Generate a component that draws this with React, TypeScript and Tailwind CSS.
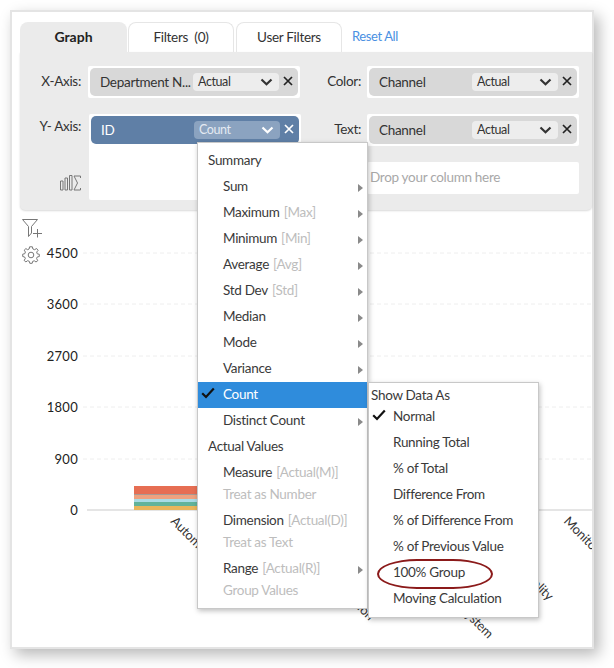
import React from 'react';

const SUMMARY = [
  { name: 'Sum' },
  { name: 'Maximum', hint: '[Max]' },
  { name: 'Minimum', hint: '[Min]' },
  { name: 'Average', hint: '[Avg]' },
  { name: 'Std Dev', hint: '[Std]' },
  { name: 'Median' },
  { name: 'Mode' },
  { name: 'Variance' },
];

const SHOW_AS = ['Running Total', '% of Total', 'Difference From', '% of Difference From', '% of Previous Value'];

const TICKS = [
  { label: '4500', y: 253 },
  { label: '3600', y: 304 },
  { label: '2700', y: 356 },
  { label: '1800', y: 407 },
  { label: '900', y: 459 },
  { label: '0', y: 510 },
];

const STACK = [
  { y: 486, h: 8, fill: '#e66e53' },
  { y: 494, h: 1, fill: '#a89a94' },
  { y: 495, h: 4, fill: '#eea27f' },
  { y: 499, h: 3, fill: '#a8dbe6' },
  { y: 502, h: 4, fill: '#62b39a' },
  { y: 506, h: 4, fill: '#e9b55b' },
];

const Chevron = ({ light }: { light?: boolean }) => (
  <svg width="13" height="8" viewBox="0 0 13 8" className={light ? 'text-white' : 'text-[#333]'}>
    <path d="M1.5 1.5 L6.5 6.2 L11.5 1.5" fill="none" stroke="currentColor" strokeWidth="2.2" />
  </svg>
);

const Close = ({ light }: { light?: boolean }) => (
  <svg width="10" height="10" viewBox="0 0 10 10" className={light ? 'text-white' : 'text-[#222]'}>
    <path d="M1 1 L9 9 M9 1 L1 9" fill="none" stroke="currentColor" strokeWidth="1.7" />
  </svg>
);

const Arrow = () => (
  <svg width="5" height="8" viewBox="0 0 5 8" className="absolute right-[4px] top-[10px]">
    <polygon points="0,0 5,4 0,8" fill="#8a8a8a" />
  </svg>
);

const Check = ({ color }: { color: string }) => (
  <svg width="14" height="12" viewBox="0 0 14 12" className="absolute">
    <path d="M1.2 6.2 L5 10 L12.8 1.5" fill="none" stroke={color} strokeWidth="2.2" />
  </svg>
);

const Chip = ({ name, agg, active }: { name: string; agg: string; active?: boolean }) => (
  <div className={`flex h-[28px] items-center rounded-[5px] pl-[10px] ${active ? 'bg-[#5f7fa6] text-white' : 'bg-[#d8d8d8] text-[#333]'}`}>
    <span className="flex-1 whitespace-nowrap text-[13.5px] tracking-[-0.3px]">{name}</span>
    <div className={`flex h-[18px] w-[86px] items-center justify-between rounded-[4px] pl-[5px] pr-[6px] text-[12.5px] tracking-[-0.4px] ${active ? 'bg-[#8ba3c0] text-[#e4eaf2]' : 'bg-[#ededed] text-[#333]'}`}>
      <span>{agg}</span>
      <Chevron light={active} />
    </div>
    <div className="flex w-[19px] justify-center pb-[2px] pr-[2px]">
      <Close light={active} />
    </div>
  </div>
);

const Row = ({ children, indent = 25 }: { children: React.ReactNode; indent?: number }) => (
  <div className="relative flex h-[26px] items-center whitespace-nowrap pb-[1px]" style={{ paddingLeft: indent }}>
    {children}
  </div>
);

const Hint = ({ children }: { children: React.ReactNode }) => (
  <span className="ml-[4px] text-[#bdbdbd]">{children}</span>
);

const Muted = ({ children, last }: { children: React.ReactNode; last?: boolean }) => (
  <div className={`flex h-[17px] items-center pb-[1px] pl-[25px] text-[#bdbdbd] ${last ? '' : 'mb-[5px]'}`}>{children}</div>
);

const Chart = () => (
  <svg width="548" height="437" viewBox="44 210 548 437" className="block shrink-0 font-[Lato,sans-serif]">
    {TICKS.slice(0, 5).map(t => (
      <line key={t.y} x1="83" x2="592" y1={t.y} y2={t.y} stroke="#eeeeee" strokeDasharray="4 3" />
    ))}
    <line x1="87" x2="592" y1="510" y2="510" stroke="#dcdcdc" strokeWidth="1.5" />
    {TICKS.map(t => (
      <text key={t.label} x="78" y={t.y + 5} textAnchor="end" fontSize="13" letterSpacing="0.3" fill="#222">
        {t.label}
      </text>
    ))}
    {STACK.map(s => (
      <rect key={s.y} x="134" y={s.y} width="98" height={s.h} fill={s.fill} />
    ))}
    <g fontSize="13" letterSpacing="-0.2" fill="#333">
      <text transform="translate(170 522) rotate(45)">Automation</text>
      <text transform="translate(369 621) rotate(45)" textAnchor="end">Customer Operation</text>
      <text transform="translate(488 639) rotate(45)" textAnchor="end">Operating System</text>
      <text transform="translate(548 601) rotate(45)" textAnchor="end">Quality</text>
      <text transform="translate(563 522) rotate(45)">Monitoring</text>
    </g>
  </svg>
);

export default function App() {
  return (
    <div className="h-[668px] w-[614px] overflow-hidden bg-white pl-[10px] pt-[10px] font-[Lato,sans-serif] text-[#333]">
      <div className="relative h-[639px] w-[584px] border-2 border-[#e4e4e4] bg-white pl-[8px] pt-[10px] shadow-[5px_6px_14px_rgba(0,0,0,0.28)]">
        {/* Tabs */}
        <div className="flex h-[30px] items-stretch text-[13.5px] tracking-[-0.3px]">
          <div className="flex w-[107px] items-center justify-center rounded-t-lg bg-[#ebebeb] pb-[2px] text-[14px] font-bold tracking-normal text-[#222]">Graph</div>
          <div className="ml-[1px] flex w-[106px] items-center justify-center rounded-t-lg border border-b-0 border-[#e6e6e6]">Filters&nbsp;&nbsp;(0)</div>
          <div className="ml-[2px] flex w-[106px] items-center justify-center rounded-t-lg border border-b-0 border-[#e6e6e6]">User Filters</div>
          <div className="ml-[10px] flex items-center text-[13px] tracking-[-0.4px] text-[#4a90e2]">Reset All</div>
        </div>

        {/* Field wells */}
        <div className="flex h-[158px] rounded-b-[5px] bg-[#ebebeb] pt-[14px] text-[13.5px] tracking-[-0.3px] shadow-[0_1px_2px_rgba(0,0,0,0.15)]">
          <div className="flex w-[281px] flex-col gap-[16px]">
            <div className="flex h-[32px]">
              <div className="w-[61px] pt-[5px] text-right">X-Axis:</div>
              <div className="ml-[7px] w-[212px] rounded-[2px] bg-white p-[2px]">
                <Chip name="Department N..." agg="Actual" />
              </div>
            </div>
            <div className="flex h-[86px]">
              <div className="flex w-[61px] flex-col items-end justify-between pb-[9px] pt-[2px]">
                <span>Y- Axis:</span>
                <svg width="21" height="16" viewBox="0 0 21 16" className="text-[#777]">
                  <path d="M0.5 6 V15 H3 V6 Z M5 3 V15 H7.5 V3 Z M9.5 0.5 V15 H12 V0.5 Z" fill="none" stroke="currentColor" />
                  <path d="M20.5 3 V1 H14 L17.5 8 L14 15 H20.5 V13" fill="none" stroke="currentColor" />
                </svg>
              </div>
              <div className="ml-[8px] w-[212px] rounded-[2px] bg-white p-[2px]">
                <Chip name="ID" agg="Count" active />
              </div>
            </div>
          </div>
          <div className="flex flex-col gap-[16px]">
            <div className="flex h-[32px]">
              <div className="w-[60px] pt-[5px] text-right">Color:</div>
              <div className="ml-[6px] w-[212px] rounded-[2px] bg-white p-[2px]">
                <Chip name="Channel" agg="Actual" />
              </div>
            </div>
            <div className="flex h-[32px]">
              <div className="w-[60px] pt-[5px] text-right">Text:</div>
              <div className="ml-[6px] w-[212px] rounded-[2px] bg-white p-[2px]">
                <Chip name="Channel" agg="Actual" />
              </div>
            </div>
            <div className="ml-[66px] flex h-[32px] w-[212px] items-center rounded-[2px] bg-white pb-[1px] pl-[3px] text-[#a8a8a8]">
              Drop your column here
            </div>
          </div>
        </div>

        {/* Chart */}
        <div className="flex">
          <div className="flex w-[24px] flex-col pl-[2px] pt-[9px] text-[#777]">
            <svg width="21" height="19" viewBox="0 0 21 19">
              <path d="M0.5 0.5 H15.5 L9.5 7.5 V14 L6.5 17.5 V7.5 Z" fill="none" stroke="currentColor" />
              <path d="M11 14.5 H20 M15.5 10 V18.5" fill="none" stroke="currentColor" />
            </svg>
            <svg width="18" height="18" viewBox="0 0 18 18" className="mt-[8px]">
              <path
                d="M7.6 0.8 H10.4 L10.9 3 L12.6 3.7 L14.6 2.5 L16.1 4.4 L14.7 6 L15.2 7.8 L17.3 8.3 V10.5 L15.2 11 L14.6 12.7 L15.8 14.6 L14 16 L12.3 14.8 L10.7 15.3 L10.2 17.3 H7.8 L7.3 15.3 L5.6 14.7 L3.9 15.9 L2.1 14.4 L3.3 12.6 L2.7 11 L0.7 10.5 V8.2 L2.8 7.7 L3.4 6 L2.2 4.2 L3.9 2.6 L5.6 3.7 L7.1 3 Z"
                fill="none"
                stroke="currentColor"
              />
              <circle cx="9" cy="9" r="2.8" fill="none" stroke="currentColor" />
            </svg>
          </div>
          <Chart />
        </div>

        {/* Aggregation menu */}
        <div className="absolute left-[185px] top-[130px] h-[467px] w-[171px] border border-[#c8c8c8] bg-white pt-[5px] text-[13.5px] tracking-[-0.3px] text-[#3a3a3a] shadow-[1px_2px_5px_rgba(0,0,0,0.25)]">
          <Row indent={10}>Summary</Row>
          {SUMMARY.map(item => (
            <Row key={item.name}>
              {item.name}
              {item.hint && <Hint>{item.hint}</Hint>}
              <Arrow />
            </Row>
          ))}
          <div className="relative flex h-[26px] items-center bg-[#2f8cdc] pb-[1px] pl-[25px] text-white">
            <div className="absolute left-[3px] top-[5px]">
              <Check color="#111111" />
            </div>
            Count
          </div>
          <Row>
            Distinct Count
            <Arrow />
          </Row>
          <Row indent={10}>Actual Values</Row>
          <Row>
            Measure<Hint>[Actual(M)]</Hint>
          </Row>
          <Muted>Treat as Number</Muted>
          <Row>
            Dimension<Hint>[Actual(D)]</Hint>
          </Row>
          <Muted>Treat as Text</Muted>
          <Row>
            Range<Hint>[Actual(R)]</Hint>
            <Arrow />
          </Row>
          <Muted last>Group Values</Muted>
        </div>

        {/* Show data as submenu */}
        <div className="absolute left-[356px] top-[370px] h-[236px] w-[171px] border border-[#c8c8c8] bg-white text-[13.5px] tracking-[-0.3px] text-[#3a3a3a] shadow-[1px_2px_5px_rgba(0,0,0,0.25)]">
          <div className="h-[21px] pl-[2px] pt-[3px] leading-[18px]">Show Data As</div>
          <div className="relative flex h-[26px] items-center pb-[1px] pl-[24px]">
            <div className="absolute left-[3px] top-[5px]">
              <Check color="#111111" />
            </div>
            Normal
          </div>
          {SHOW_AS.map(label => (
            <Row key={label} indent={24}>
              {label}
            </Row>
          ))}
          <Row indent={24}>100% Group</Row>
          <Row indent={24}>Moving Calculation</Row>
          <div className="absolute left-[8px] top-[176px] h-[30px] w-[116px] rounded-[40px/15px] border-2 border-[#8b1a1a]" />
        </div>
      </div>
    </div>
  );
}
